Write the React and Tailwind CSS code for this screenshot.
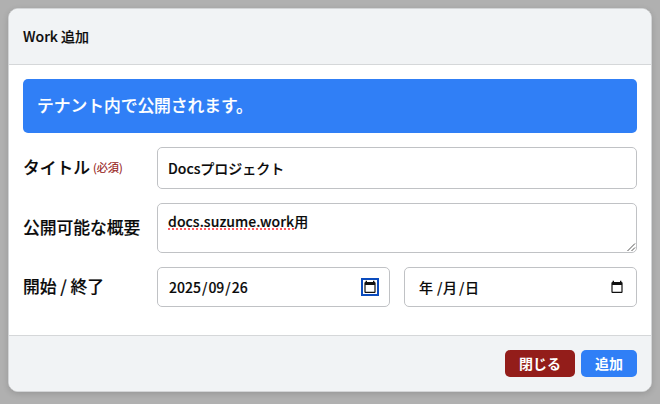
function CalendarIcon() {
  return (
    <svg width="14" height="14" viewBox="0 0 14 14" className="block">
      <path
        fillRule="evenodd"
        fill="#101010"
        d="M2.6 .8h1.4v1.2h6V.8h1.4v1.2q1.2 0 1.2 1v8.8q0 1.2-1 1.2H2.4q-1 0-1-1.2V3q0-1 1.2-1zM2.6 5v6.8h8.8V5z"
      />
    </svg>
  );
}

function Label({ children }) {
  return (
    <div className="flex w-[134px] shrink-0 items-center pb-[2px] text-[16.8px] leading-6 tracking-[-0.05px] whitespace-nowrap">
      {children}
    </div>
  );
}

function DateField({ parts, focused }) {
  return (
    <div className="flex h-10 w-[233px] items-center justify-between rounded-[5px] border border-[#c0c2c5] bg-white pr-[10px] pl-[11px] text-sm">
      <div className="flex whitespace-pre leading-5">{parts}</div>
      <div className={focused ? "border-2 border-[#0b4bbd]" : "border-2 border-transparent"}>
        <CalendarIcon />
      </div>
    </div>
  );
}

export default function App() {
  return (
    <div
      lang="ja"
      className="h-[404px] w-[660px] overflow-hidden bg-[#b0b0b0] p-2 font-['Noto_Sans_CJK_JP',sans-serif] font-medium text-[#0a0a0a] [-webkit-text-stroke:0.15px_currentColor]"
    >
      <div className="flex h-[384px] w-[644px] flex-col overflow-hidden rounded-[10px] border border-[#d3d5d7] bg-white shadow-[0_2px_6px_rgba(0,0,0,0.14)]">
        <header className="flex h-14 shrink-0 items-center border-b border-[#d5d7d9] bg-[#f1f3f5] px-[14px] pb-[2px] text-sm">
          Work 追加
        </header>
        <main className="flex grow flex-col gap-[14px] p-[14px]">
          <div className="flex h-[54px] items-center rounded-[5px] bg-[#307ff6] px-[14px] text-[16.8px] tracking-[-0.05px] text-white">
            テナント内で公開されます。
          </div>
          <div className="flex h-[42px] items-center">
            <Label>
              タイトル
              <span className="ml-[3px] text-[11.2px] font-normal text-[#971d1b]">(必須)</span>
            </Label>
            <div className="flex h-full grow items-center rounded-[5px] border border-[#c0c2c5] px-[10px] text-sm">
              Docsプロジェクト
            </div>
          </div>
          <div className="flex h-[50px] items-center">
            <Label>公開可能な概要</Label>
            <div className="relative h-full grow rounded-[5px] border border-[#c0c2c5] px-[10px] pt-[7px] text-sm leading-5">
              <span className="relative tracking-[0.06px]">
                docs.suzume.work
                <span className="absolute bottom-[1px] left-0 h-[2px] w-full bg-[repeating-linear-gradient(90deg,#ff5a60_0_2px,transparent_2px_4px)]" />
              </span>
              用
              <svg width="9" height="9" viewBox="0 0 9 9" className="absolute right-0 bottom-0" stroke="#555" fill="none">
                <path d="M.5 8 8 .5M4.5 8 8 4.5" />
              </svg>
            </div>
          </div>
          <div className="flex h-10 items-center">
            <Label>開始 / 終了</Label>
            <div className="flex grow justify-between">
              <DateField
                focused
                parts={
                  <>
                    <span>2025</span>
                    <span className="mx-[1px]">/</span>
                    <span>09</span>
                    <span className="mx-[1px]">/</span>
                    <span>26</span>
                  </>
                }
              />
              <DateField
                parts={
                  <>
                    <span className="ml-[3px] w-[18px]">年</span>
                    <span className="w-[6px]">/</span>
                    <span className="w-4">月</span>
                    <span className="w-[6px]">/</span>
                    <span>日</span>
                  </>
                }
              />
            </div>
          </div>
        </main>
        <footer className="flex h-14 shrink-0 items-center justify-end gap-[6px] border-t border-[#d5d7d9] bg-[#f1f3f5] px-[14px] text-sm font-bold text-white [-webkit-text-stroke:0px]">
          <button className="h-[27px] w-[70px] rounded-[5px] bg-[#931d1a] pb-[2px] leading-5">閉じる</button>
          <button className="h-[27px] w-14 rounded-[5px] bg-[#307ff6] pb-[2px] leading-5">追加</button>
        </footer>
      </div>
    </div>
  );
}
